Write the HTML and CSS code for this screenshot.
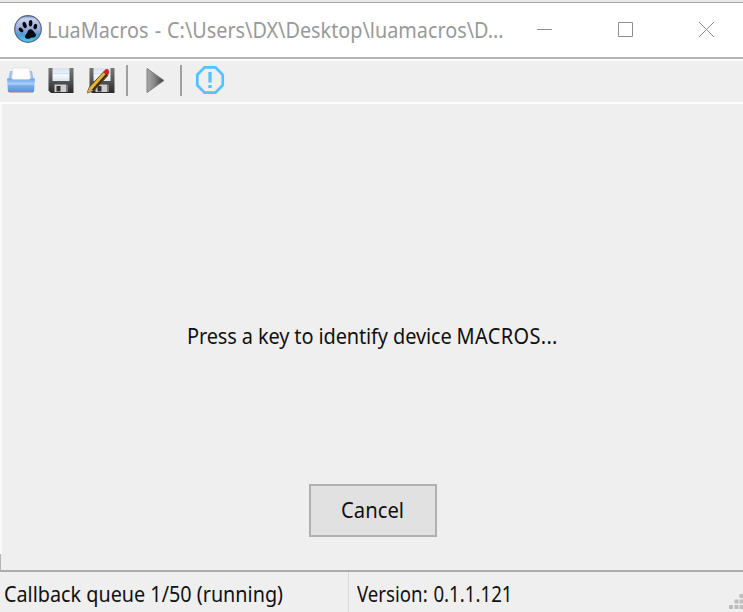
FILE: index.html
```html
<!DOCTYPE html>
<html lang="en">
<head>
<meta charset="utf-8">
<title>LuaMacros</title>
<link rel="stylesheet" href="styles.css">
</head>
<body>
<div class="window">
  <header class="titlebar">
    <svg class="app-icon" width="30" height="30" viewBox="0 0 30 30">
      <defs>
        <linearGradient id="orb" x1="0" y1="0" x2="0" y2="1"><stop offset="0" stop-color="#6d8fbd"/><stop offset=".12" stop-color="#c9d3ee"/><stop offset=".55" stop-color="#92a5d4"/><stop offset=".7" stop-color="#4c9cd4"/><stop offset="1" stop-color="#4cccf2"/></linearGradient>
      </defs>
      <circle cx="15" cy="15" r="13.3" fill="url(#orb)" stroke="#56677e" stroke-width="1.200"/>
      <g fill="#05080d">
        <ellipse cx="8" cy="16" rx="1.800" ry="2.800" transform="rotate(-48 8 16)"/>
        <ellipse cx="11.600" cy="11" rx="1.900" ry="3.200" transform="rotate(-18 11.600 11)"/>
        <ellipse cx="17.600" cy="9.300" rx="1.800" ry="3.200" transform="rotate(2 17.600 9.300)"/>
        <ellipse cx="22.300" cy="12.600" rx="1.800" ry="2.800" transform="rotate(18 22.300 12.600)"/>
        <path d="M17.200 15.300c2.600-.2 3 2 4.500 3.400 1.900 1.700 1.600 4.500-.9 4.800-1.600.2-2.300-.1-3.600.7-1.800 1-5.200.6-5.200-1.500 0-1.900 1.500-2.200 2.200-3.900.6-1.500 1-3.300 3-3.500z"/>
      </g>
    </svg>
    <span class="text title">LuaMacros - C:\Users\DX\Desktop\luamacros\D...</span>
    <svg class="controls" width="178" height="18" viewBox="0 0 178 18" fill="none" stroke="#8e8e8e">
      <path d="M1 8.500H16M82.500 1.500h14v14h-14z"/>
      <path d="M163 1l15 15M178 1l-15 15"/>
    </svg>
  </header>
  <nav class="toolbar">
    <svg width="30" height="30" viewBox="0 0 30 30">
      <defs><linearGradient id="tray" x1="0" y1="0" x2="0" y2="1"><stop offset="0" stop-color="#6ba2ea"/><stop offset=".4" stop-color="#a9cff9"/><stop offset=".55" stop-color="#77ace9"/><stop offset="1" stop-color="#5792df"/></linearGradient></defs>
      <path d="M2 16L4 6h22l2 10z" fill="#9bc0f0"/>
      <path d="M5.500 15L7 3h16l2 12z" fill="#fdfdfd" stroke="#dcdcdc" stroke-width=".7"/>
      <path d="M1 13.500h4.500l1.500 1h16l1.500-1H29L28 27H2z" fill="url(#tray)"/>
      <path d="M3 27.500h24" stroke="#b9b9b9"/>
    </svg>
    <svg width="30" height="30" viewBox="0 0 30 30">
      <defs>
        <linearGradient id="disk" x1="0" y1="0" x2="0" y2="1"><stop offset="0" stop-color="#777"/><stop offset=".5" stop-color="#555"/><stop offset="1" stop-color="#292929"/></linearGradient>
        <linearGradient id="label" x1="0" y1="0" x2="0" y2="1"><stop offset="0" stop-color="#d3e2ee"/><stop offset=".6" stop-color="#f4f8fc"/><stop offset="1" stop-color="#d9e5ee"/></linearGradient>
        <g id="floppy">
          <path d="M2.500 3h25v25H5l-2.500-2.500z" fill="url(#disk)"/>
          <path d="M6.500 3h17v13h-17z" fill="url(#label)"/>
          <path d="M7 8.500h16" stroke="#d2e0eb"/>
          <path d="M8.500 19.500h11.500V27H8.500z" fill="#cdcdcd"/>
          <path d="M10.500 21h4v5.500h-4z" fill="#333"/>
          <path d="M20 19.500h2V27h-2z" fill="#777"/>
        </g>
      </defs>
      <use href="#floppy"/>
    </svg>
    <svg class="edit" width="30" height="30" viewBox="0 0 30 30">
      <use href="#floppy"/>
      <path d="M16.500 7l4.500 3.500L7 25.500 0 28l2.500-6z" fill="#e5b62b" stroke="#554017" stroke-width=".9"/>
      <path d="M19.800 9.500L5.500 25.500" stroke="#392c12" stroke-width="2"/>
      <path d="M2.500 22.500l3.700 3L0 28z" fill="#cda870"/>
      <path d="M16.500 7l2.200-2.500H21l1 2.500-1.200 3z" fill="#d91e20" stroke="#a22" stroke-width=".6"/>
    </svg>
    <i class="separator"></i>
    <svg class="play" width="22" height="30" viewBox="0 0 22 30">
      <defs><linearGradient id="run"><stop offset="0" stop-color="#aaa"/><stop offset=".45" stop-color="#858585"/><stop offset="1" stop-color="#3c3c3c"/></linearGradient></defs>
      <path d="M3 3.500L20 15.500 3 27.500z" fill="url(#run)" stroke="#777" stroke-width=".9"/>
    </svg>
    <i class="separator second"></i>
    <svg class="alert" width="30" height="30" viewBox="0 0 30 30" fill="none" stroke="#55c2fd">
      <path d="M9.700 2.300h10.600l7.400 7.400v10.600l-7.400 7.400H9.700l-7.400-7.400V9.700z" stroke-width="2.700" stroke-linejoin="round"/>
      <path d="M15 7v10.500M15 20v3" stroke-width="3.300"/>
    </svg>
  </nav>
  <main class="content">
    <p class="text message">Press a key to identify device <span class="device">MACROS...</span></p>
    <button class="cancel"><span class="text">Cancel</span></button>
  </main>
  <footer class="status">
    <div class="queue"><span class="text">Callback queue 1/50 (running)</span></div>
    <div class="version"><span class="text">Version: 0.1.1.121</span></div>
    <svg class="grip" width="14" height="15" viewBox="0 0 14 15" fill="#bdbdbd"><path d="M10.500 0H14v4h-3.500zM5.500 5.500h4v4h-4zM10.500 5.500H14v4h-3.500zM0 11h4v4H0zM5.500 11h4v4h-4zM10.500 11H14v4h-3.500z"/></svg>
  </footer>
</div>
</body>
</html>
```
FILE: styles.css
```css
* { box-sizing: border-box; }
body { margin: 0; width: 743px; height: 612px; overflow: hidden; background: #efefef; font-family: "Noto Sans", sans-serif; }
.window { display: flex; flex-direction: column; height: 612px; border-top: 2px solid #e8e8e8; }
.text { display: inline-block; white-space: pre; font-size: 21px; line-height: 28px; color: #111; transform-origin: left center; }
.titlebar { height: 57px; flex: none; display: flex; align-items: center; padding-left: 13px; background: #fff; border-top: 1px solid #a6a6a6; border-bottom: 2px solid #b2b5b2; }
.app-icon { flex: none; margin-bottom: 3px; }
.title { width: 457px; margin: 0 0 0 4px; color: #999; word-spacing: 1px; transform: scaleX(.943); }
.controls { flex: none; margin: 0 0 0 32px; }
.toolbar { height: 45px; flex: none; display: flex; align-items: center; padding: 0 0 3px 6px; gap: 10px; border-top: 2px solid #fbfbfb; border-bottom: 2px solid #fcfcfc; }
.toolbar svg { flex: none; }
.edit { margin: 0 -1px 0 1px; }
.separator { width: 2px; height: 31px; background: #a0a0a0; }
.play { margin-left: 6px; }
.second { margin-left: 4px; }
.alert { margin-left: 3px; }
.content { height: 466px; flex: none; display: flex; flex-direction: column; align-items: flex-start; padding-left: 2px; background: linear-gradient(#fafafa, #fafafa) 0 0 / 2px 450px no-repeat, linear-gradient(#b5b5b5, #b5b5b5) 0 450px / 1px 16px no-repeat; }
.message { margin: 218px 0 0 185px; letter-spacing: -.13px; transform: scaleX(.951); }
.device { letter-spacing: .35px; }
.cancel { width: 128px; height: 53px; margin: 134px 0 0 307px; padding: 0 0 2px 30px; border: 2px solid #b0b0b0; border-radius: 0; background: #e1e1e1; text-align: left; font-family: inherit; }
.cancel .text { transform: scaleX(.965); }
.status { position: relative; height: 42px; display: flex; border-top: 2px solid #acacac; }
.queue { width: 349px; padding: 8px 0 0 4px; border-right: 1px solid #d9d9d9; }
.queue .text { transform: scaleX(.942); }
.version { padding: 8px 0 0 8px; }
.version .text { word-spacing: 1px; transform: scaleX(.889); }
.grip { position: absolute; right: 0; bottom: 3px; }
```
